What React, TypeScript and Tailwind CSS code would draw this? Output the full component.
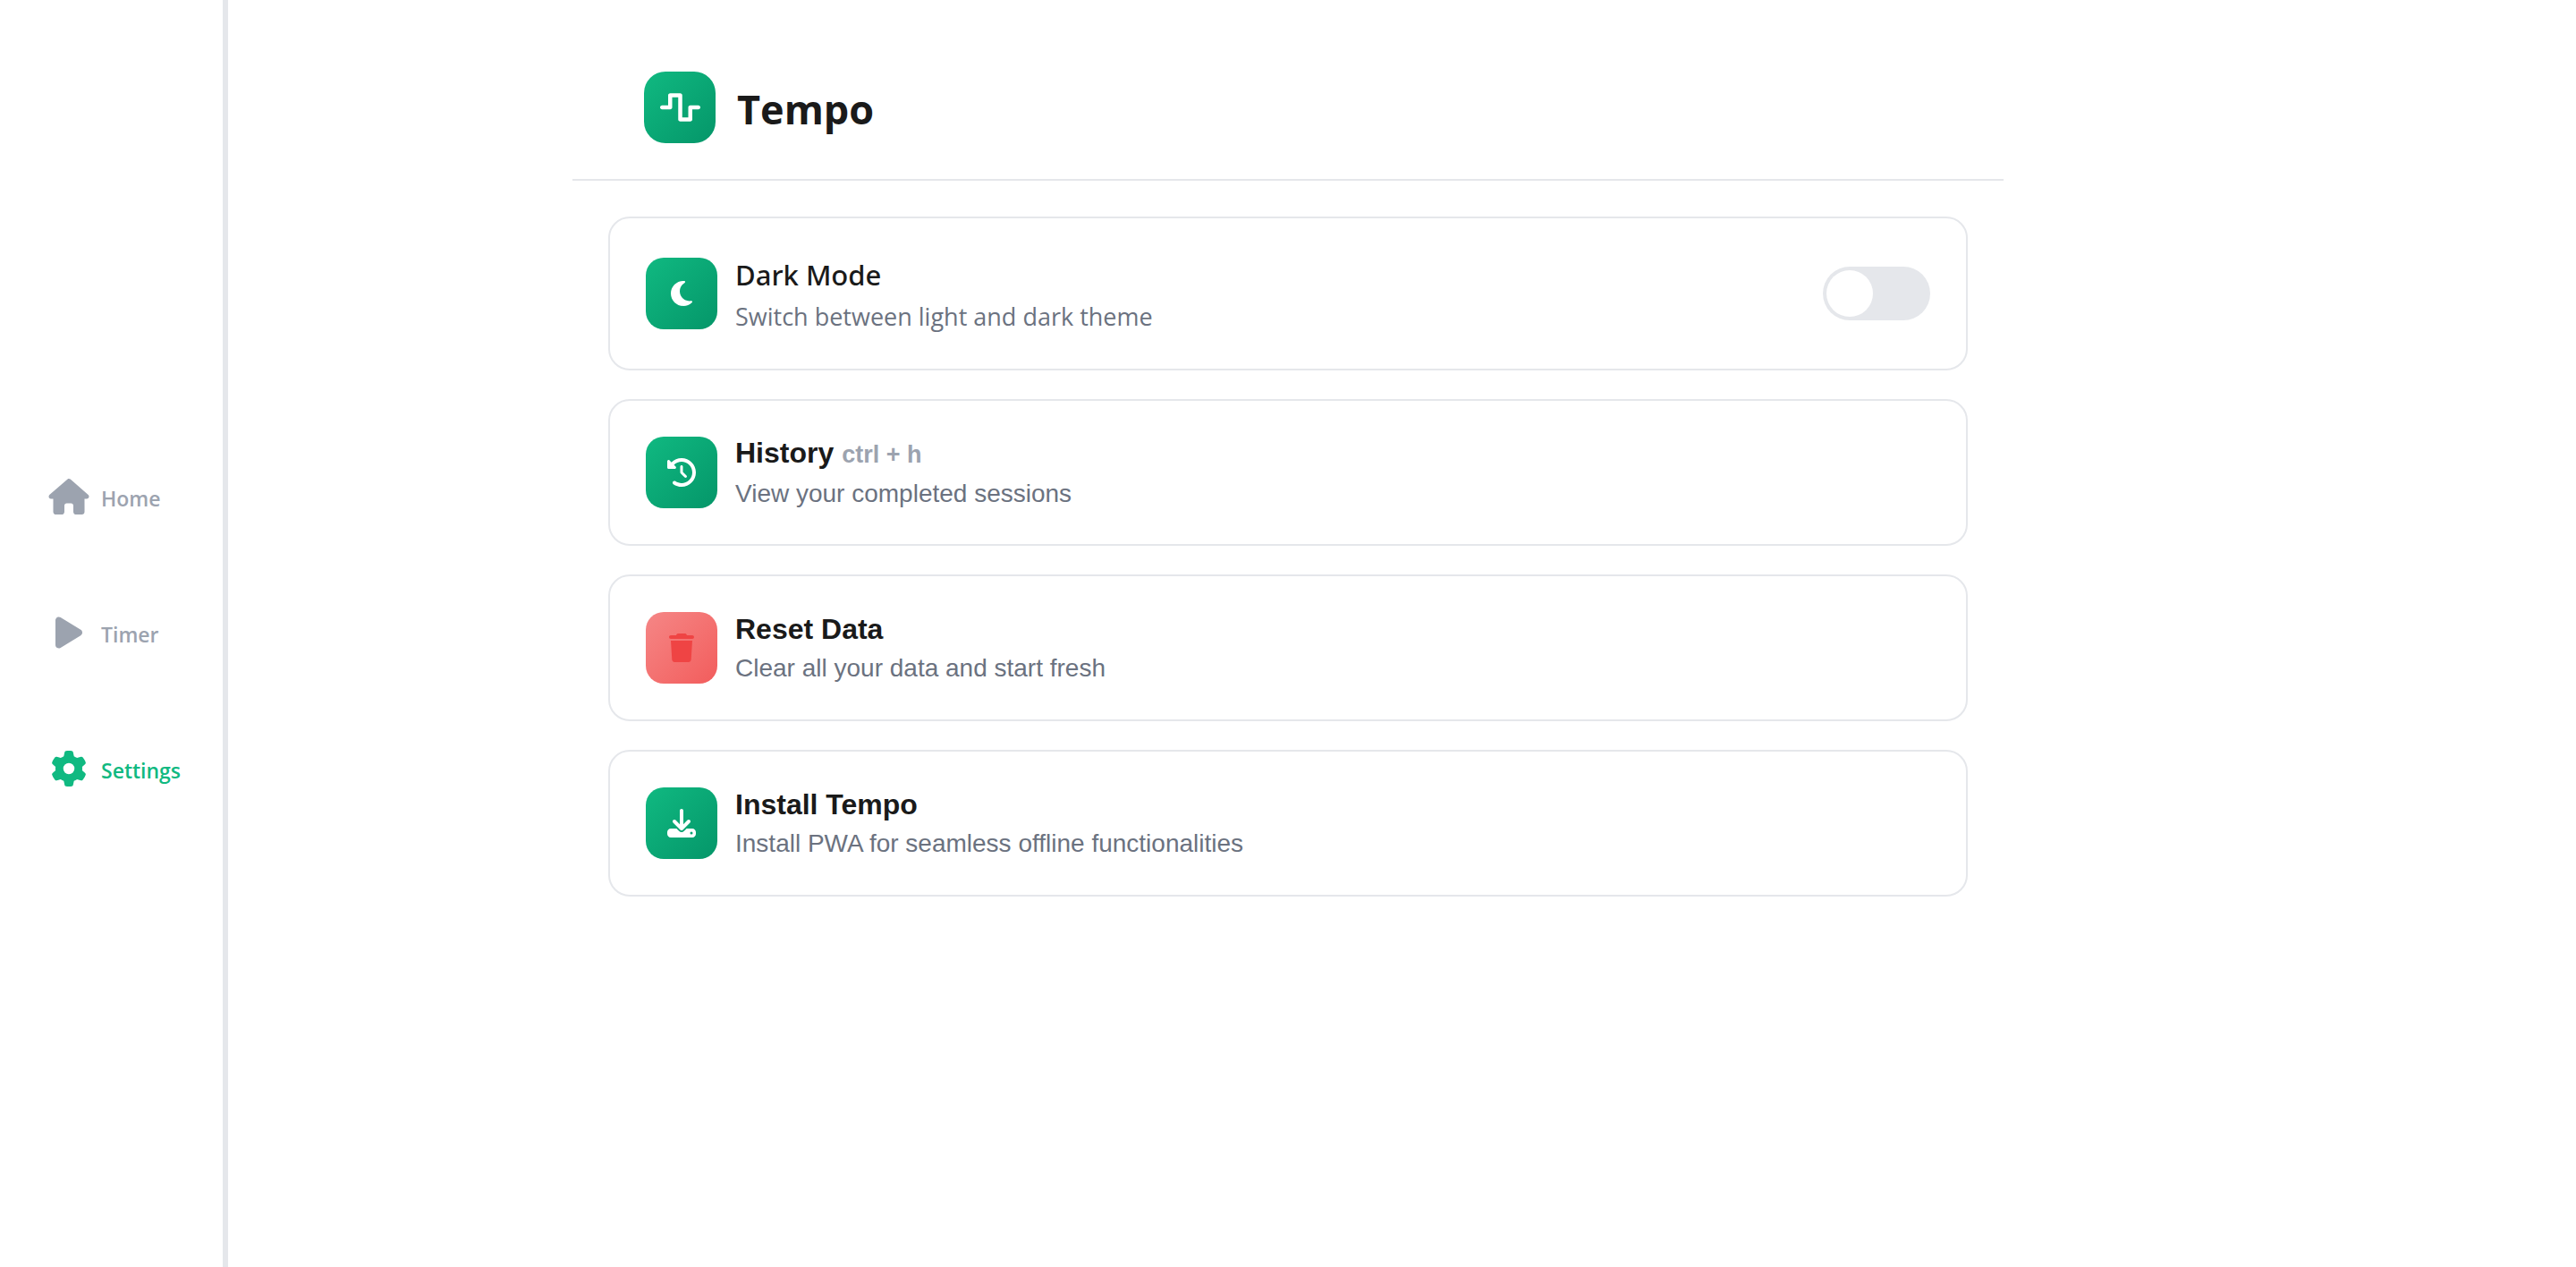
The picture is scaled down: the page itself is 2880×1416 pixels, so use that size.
import { useState, type ReactNode } from "react";
import { FaWaveSquare, FaMoon, FaClockRotateLeft, FaTrash, FaDownload, FaHouse, FaPlay, FaGear } from "react-icons/fa6";

const HUMANIST = "font-['Open_Sans',sans-serif]";
const ARIAL = "font-['Liberation_Sans',sans-serif]";
const CARD = "flex w-full items-center gap-5 rounded-3xl border-2 border-[#e5e7eb] bg-white p-10 text-left";

const navItems = [
  { label: "Home", icon: <FaHouse className="h-10 w-[46px]" />, active: false },
  { label: "Timer", icon: <FaPlay className="h-10 w-[30px]" />, active: false },
  { label: "Settings", icon: <FaGear className="size-10" />, active: true },
];

function IconTile({ children, danger = false }: { children: ReactNode; danger?: boolean }) {
  const tone = danger ? "from-[#f58686] to-[#f25c5c] text-[#ef4444]" : "from-[#10b981] to-[#059669] text-white";
  return (
    <span className={`flex size-20 shrink-0 items-center justify-center rounded-[20px] bg-linear-135 ${tone}`}>
      {children}
    </span>
  );
}

interface ActionCardProps {
  icon: ReactNode;
  title: string;
  text: string;
  shortcut?: string;
  danger?: boolean;
}

function ActionCard({ icon, title, shortcut, text, danger }: ActionCardProps) {
  return (
    <button type="button" className={`${CARD} ${ARIAL}`}>
      <IconTile danger={danger}>{icon}</IconTile>
      <span className="flex flex-col gap-2.5">
        <span className="text-[32px] leading-9 font-bold text-[#1a1a1a]">
          {title} {shortcut && <span className="text-[27px] text-[#9ca3af]">{shortcut}</span>}
        </span>
        <span className="text-[28px] leading-8 text-[#6b7280]">{text}</span>
      </span>
    </button>
  );
}

export default function App() {
  const [dark, setDark] = useState(false);
  return (
    <div className={`flex min-h-screen bg-white ${HUMANIST}`}>
      <nav className="-mr-[255px] flex w-[255px] shrink-0 flex-col justify-center gap-[72px] border-r-[6px] border-[#e5e7eb] pb-0.5 pl-12">
        {navItems.map((item) => (
          <a
            key={item.label}
            href="#"
            aria-current={item.active ? "page" : undefined}
            className={`flex h-20 items-center gap-[7px] text-[23px] font-semibold ${item.active ? "text-[#10b981]" : "text-[#9ca3af]"}`}
          >
            <span className="flex w-[58px] justify-center">{item.icon}</span>
            <span className="pt-1">{item.label}</span>
          </a>
        ))}
      </nav>
      <main className="mx-auto w-full max-w-[1600px] pt-10">
        <header className="flex items-center gap-6 border-b-2 border-[#e5e7eb] px-20 py-10">
          <span className="flex size-20 items-center justify-center rounded-3xl bg-linear-135 from-[#10b981] to-[#059669] text-white">
            <FaWaveSquare className="h-9 w-[45px]" />
          </span>
          <h1 className="pt-1 text-[45px] leading-[64px] font-bold text-[#1a1a1a]">Tempo</h1>
        </header>
        <div className="flex flex-col gap-8 p-10">
          <div className={CARD}>
            <IconTile><FaMoon className="size-8" /></IconTile>
            <div className="flex grow flex-col gap-1.5">
              <h2 id="dark-label" className="font-['Noto_Sans',sans-serif] text-[31px] leading-[46px] font-medium text-[#1a1a1a]">Dark Mode</h2>
              <p className="text-[27px] leading-9 text-[#6b7280]">Switch between light and dark theme</p>
            </div>
            <button
              type="button"
              role="switch"
              aria-checked={dark}
              aria-labelledby="dark-label"
              onClick={() => setDark(!dark)}
              className={`flex h-15 w-30 shrink-0 items-center rounded-full p-1 ${dark ? "justify-end bg-[#10b981]" : "bg-[#e5e7eb]"}`}
            >
              <span className="size-13 rounded-full bg-white" />
            </button>
          </div>
          <ActionCard icon={<FaClockRotateLeft className="size-8" />} title="History" shortcut="ctrl + h" text="View your completed sessions" />
          <ActionCard danger icon={<FaTrash className="h-8 w-7" />} title="Reset Data" text="Clear all your data and start fresh" />
          <ActionCard icon={<FaDownload className="size-8" />} title="Install Tempo" text="Install PWA for seamless offline functionalities" />
        </div>
      </main>
    </div>
  );
}
